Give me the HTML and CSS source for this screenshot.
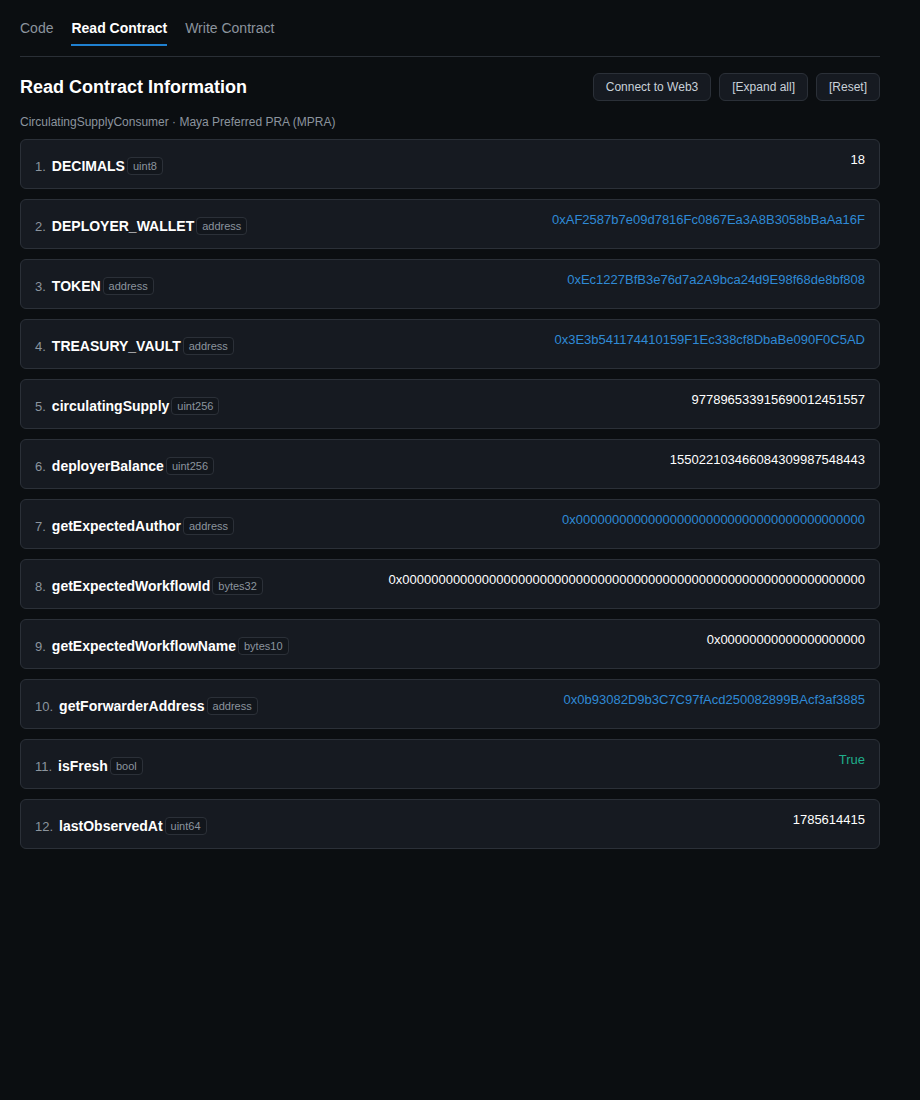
FILE: index.html
```html
<!DOCTYPE html>
<html lang="en">
<head>
<meta charset="utf-8">
<title>Read Contract</title>
<link rel="stylesheet" href="styles.css">
</head>
<body>
<div class="page">
  <nav class="tabs">
    <a class="tab">Code</a>
    <a class="tab active">Read Contract</a>
    <a class="tab">Write Contract</a>
  </nav>
  <div class="header">
    <h1 class="title">Read Contract Information</h1>
    <div class="actions">
      <button class="btn">Connect to Web3</button>
      <button class="btn">[Expand all]</button>
      <button class="btn">[Reset]</button>
    </div>
  </div>
  <div class="subtitle">CirculatingSupplyConsumer · Maya Preferred PRA (MPRA)</div>
  <div class="list">
    <div class="card"><div class="left"><span class="num">1.</span><span class="name">DECIMALS</span><span class="badge">uint8</span></div><div class="value">18</div></div>
    <div class="card"><div class="left"><span class="num">2.</span><span class="name">DEPLOYER_WALLET</span><span class="badge">address</span></div><div class="value link">0xAF2587b7e09d7816Fc0867Ea3A8B3058bBaAa16F</div></div>
    <div class="card"><div class="left"><span class="num">3.</span><span class="name">TOKEN</span><span class="badge">address</span></div><div class="value link">0xEc1227BfB3e76d7a2A9bca24d9E98f68de8bf808</div></div>
    <div class="card"><div class="left"><span class="num">4.</span><span class="name">TREASURY_VAULT</span><span class="badge">address</span></div><div class="value link">0x3E3b541174410159F1Ec338cf8DbaBe090F0C5AD</div></div>
    <div class="card"><div class="left"><span class="num">5.</span><span class="name">circulatingSupply</span><span class="badge">uint256</span></div><div class="value">977896533915690012451557</div></div>
    <div class="card"><div class="left"><span class="num">6.</span><span class="name">deployerBalance</span><span class="badge">uint256</span></div><div class="value">155022103466084309987548443</div></div>
    <div class="card"><div class="left"><span class="num">7.</span><span class="name">getExpectedAuthor</span><span class="badge">address</span></div><div class="value link">0x0000000000000000000000000000000000000000</div></div>
    <div class="card"><div class="left"><span class="num">8.</span><span class="name">getExpectedWorkflowId</span><span class="badge">bytes32</span></div><div class="value">0x0000000000000000000000000000000000000000000000000000000000000000</div></div>
    <div class="card"><div class="left"><span class="num">9.</span><span class="name">getExpectedWorkflowName</span><span class="badge">bytes10</span></div><div class="value">0x00000000000000000000</div></div>
    <div class="card"><div class="left"><span class="num">10.</span><span class="name">getForwarderAddress</span><span class="badge">address</span></div><div class="value link">0x0b93082D9b3C7C97fAcd250082899BAcf3af3885</div></div>
    <div class="card"><div class="left"><span class="num">11.</span><span class="name">isFresh</span><span class="badge">bool</span></div><div class="value ok">True</div></div>
    <div class="card"><div class="left"><span class="num">12.</span><span class="name">lastObservedAt</span><span class="badge">uint64</span></div><div class="value">1785614415</div></div>
  </div>
</div>
</body>
</html>
```
FILE: styles.css
```css
* { box-sizing: border-box; }
html, body { margin: 0; padding: 0; background: #0b0e11; }
body {
  font-family: "Liberation Sans", Arial, sans-serif;
  color: #e6edf3;
  min-height: 1100px;
}
.page { padding: 20px 40px 20px 20px; }
.tabs {
  display: flex;
  gap: 18px;
  padding-bottom: 11px;
  border-bottom: 1px solid #2a2f36;
}
.tab {
  font-size: 14px;
  line-height: 16px;
  color: #8b949e;
  padding-bottom: 8px;
  border-bottom: 2px solid transparent;
  margin-bottom: -1px;
}
.tab.active {
  color: #ffffff;
  font-weight: bold;
  border-bottom-color: #1f80d0;
}
.header {
  display: flex;
  align-items: center;
  justify-content: space-between;
  margin-top: 16px;
}
.title {
  margin: 0;
  font-size: 18px;
  line-height: 22px;
  font-weight: bold;
  color: #ffffff;
}
.actions { display: flex; gap: 8px; }
.btn {
  font-family: inherit;
  font-size: 12px;
  color: #c9d1d9;
  background: #161a21;
  border: 1px solid #2b3038;
  border-radius: 6px;
  height: 28px;
  padding: 0 12px;
}
.subtitle {
  margin-top: 13px;
  font-size: 12px;
  line-height: 16px;
  color: #8b949e;
}
.list {
  margin-top: 9px;
  display: flex;
  flex-direction: column;
  gap: 10px;
}
.card {
  display: flex;
  justify-content: space-between;
  align-items: flex-start;
  background: #161a21;
  border: 1px solid #2b3038;
  border-radius: 6px;
  padding: 12px 14px 13px 14px;
}
.left {
  display: flex;
  align-items: center;
  margin-top: 5px;
  height: 18px;
}
.num {
  font-size: 13px;
  color: #8b949e;
  margin-right: 6px;
}
.name {
  font-size: 14px;
  font-weight: bold;
  color: #ffffff;
}
.badge {
  margin-left: 2px;
  font-size: 11px;
  line-height: 16px;
  color: #8b949e;
  border: 1px solid #2b3038;
  border-radius: 4px;
  padding: 0 5px;
  background: #12161c;
}
.value {
  font-size: 13px;
  line-height: 16px;
  color: #ffffff;
}
.value.link { color: #2f8ad6; }
.value.ok { color: #1fae8b; }
```
